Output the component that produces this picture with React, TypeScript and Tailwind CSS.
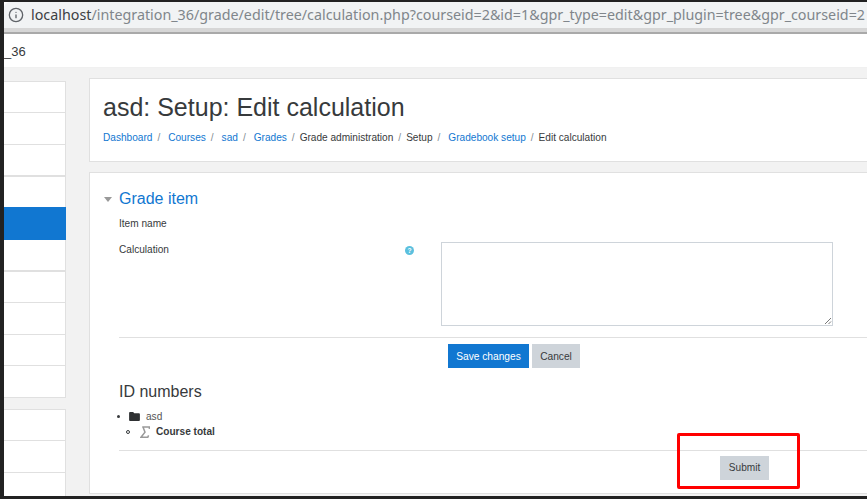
import React from "react";
import { Info } from "lucide-react";

const crumbs = [
  { label: "Dashboard", link: true },
  { label: "Courses", link: true },
  { label: "sad", link: true },
  { label: "Grades", link: true },
  { label: "Grade administration", link: false },
  { label: "Setup", link: false },
  { label: "Gradebook setup", link: true },
  { label: "Edit calculation", link: false },
];

const SideItem = ({ h, thick, last }: { h: string; thick?: boolean; last?: boolean }) => (
  <div
    className={`${h} bg-white border-[#e0e0e0] ${
      last ? "" : thick ? "border-b-2" : "border-b"
    }`}
  />
);

const App: React.FC = () => {
  return (
    <div
      className="relative w-[867px] h-[499px] overflow-hidden bg-[#222] pl-1 pt-[2px] text-[#373a3c]"
      style={{ fontFamily: '"Liberation Sans", Arial, sans-serif' }}
    >
      <div className="w-[863px] h-[494px] flex flex-col bg-white overflow-hidden">
        {/* browser address bar */}
        <div className="h-[32px] shrink-0 bg-[#f1f3f4] rounded-tl-md flex items-center pl-[4px] pb-[4px] border-b-2 border-[#a9a9a9] shadow-[inset_0_-4px_0_#d6d6d6]">
          <Info size={16} strokeWidth={2} className="text-[#5f6368] shrink-0" />
          <div
            className="ml-[7px] text-[14.3px] leading-5 whitespace-nowrap text-[#80868b]"
            style={{ fontFamily: '"Noto Sans", "Open Sans", sans-serif' }}
          >
            <span className="text-[#3c4043]">localhost</span>
            /integration_36/grade/edit/tree/calculation.php?courseid=2&amp;id=1&amp;gpr_type=edit&amp;gpr_plugin=tree&amp;gpr_courseid=2
          </div>
        </div>

        {/* moodle navbar */}
        <div className="h-[34px] shrink-0 flex items-center pt-[2px] text-[13px] border-b border-[#f0f0f0]">
          <span>_36</span>
        </div>

        {/* page */}
        <div className="flex-1 flex bg-[#f2f2f2] min-h-0">
          <div className="w-[62px] shrink-0 pt-[13px]">
            <div className="border-t border-r border-[#e0e0e0]">
              <SideItem h="h-[31px]" />
              <SideItem h="h-[32px]" />
              <SideItem h="h-[32px]" thick />
              <SideItem h="h-[30px]" last />
              <div className="h-[33px] bg-[#1177d1] -mr-px" />
              <SideItem h="h-[32px]" thick />
              <SideItem h="h-[31px]" />
              <SideItem h="h-[32px]" />
              <SideItem h="h-[31px]" />
              <SideItem h="h-[32px]" />
            </div>
            <div className="mt-[11px] border-t border-r border-[#e0e0e0]">
              <SideItem h="h-[31px]" />
              <SideItem h="h-[32px]" />
              <SideItem h="h-[32px]" />
            </div>
          </div>

          <div className="ml-[23px] w-[800px] shrink-0 pt-[10px]">
            {/* page header */}
            <div className="h-[84px] bg-white border border-[#e0e0e0] pl-[13px] pt-[13px]">
              <h1 className="text-[25px] leading-[31px]">asd: Setup: Edit calculation</h1>
              <div className="mt-[7px] flex text-[10.1px] leading-4 whitespace-nowrap">
                {crumbs.map((c, i) => (
                  <span key={c.label} className="flex">
                    <span className={c.link ? "text-[#1177d1]" : ""}>{c.label}</span>
                    {i < crumbs.length - 1 && (
                      <span className={`text-[#818a91] ml-[5px] ${crumbs[i + 1].link ? "mr-[8px]" : "mr-[5px]"}`}>
                        /
                      </span>
                    )}
                  </span>
                ))}
              </div>
            </div>

            {/* form */}
            <div className="mt-[10px] h-[322px] bg-white border border-[#e0e0e0] pl-[14px] pt-[16px]">
              <div className="flex items-center h-[20px]">
                <span className="w-0 h-0 border-x-[4px] border-x-transparent border-t-[5px] border-t-[#999]" />
                <span className="ml-[7px] text-[16px] text-[#1177d1]">Grade item</span>
              </div>
              <div className="ml-[15px]">
                <div className="mt-[7px] text-[10.1px] leading-4">Item name</div>
                <div className="mt-[10px] flex h-[84px]">
                  <div className="w-[286px] text-[10.1px] leading-4">Calculation</div>
                  <svg viewBox="0 0 16 16" className="w-[9px] h-[9px] mt-[4px]">
                    <circle cx="8" cy="8" r="8" fill="#5bc0de" />
                    <text x="8" y="12.5" textAnchor="middle" fontSize="12" fontWeight="bold" fill="#fff">?</text>
                  </svg>
                  <div className="ml-[27px] w-[392px] h-[84px] border border-[#ced4da] relative">
                    <svg viewBox="0 0 8 8" className="absolute right-0 bottom-0 w-[8px] h-[8px]">
                      <path d="M1 7 L7 1 M4.5 7 L7 4.5" stroke="#555" strokeWidth="0.8" />
                    </svg>
                  </div>
                </div>
                <div className="mt-[11px] border-t border-[#e0e0e0] h-[7px]" />
                <div className="flex ml-[329px] gap-[3px] text-[10.2px]">
                  <div className="h-[24px] w-[81px] pt-px bg-[#1177d1] text-white flex items-center justify-center">
                    Save changes
                  </div>
                  <div className="h-[24px] w-[48px] pt-px bg-[#ced4da] flex items-center justify-center">
                    Cancel
                  </div>
                </div>
                <div className="mt-[14px] text-[16px] leading-5">ID numbers</div>
                <div className="mt-[7px] text-[10.1px] leading-[15px]">
                  <div className="flex items-center h-[15px]">
                    <span className="w-[3px] h-[3px] rounded-full bg-[#373a3c] ml-[-2px]" />
                    <svg viewBox="0 0 12 10" className="w-[11px] h-[9px] ml-[9px]">
                      <path d="M0 1 Q0 0 1 0 H4.5 L5.7 1.4 H11 Q12 1.4 12 2.4 V9 Q12 10 11 10 H1 Q0 10 0 9 Z" fill="#2f3133" />
                    </svg>
                    <span className="ml-[6px] text-[#555]">asd</span>
                  </div>
                  <div className="flex items-center h-[15px]">
                    <span className="w-[4px] h-[4px] rounded-full border border-[#373a3c] ml-[7px]" />
                    <svg viewBox="0 0 10 12" className="w-[10px] h-[12px] ml-[10px]">
                      <path d="M2.2 1 H9.6 L9.2 2.8 M3 1 L5 6.2 L1 11.2 H7.8 L8.6 9.4" fill="none" stroke="#999" strokeWidth="1.5" />
                    </svg>
                    <span className="ml-[6px] font-bold">Course total</span>
                  </div>
                </div>
                <div className="mt-[11px] border-t border-[#e0e0e0]" />
                <div className="mt-[5px] ml-[601px] h-[24px] w-[49px] bg-[#ced4da] flex items-center justify-center text-[10.1px]">
                  Submit
                </div>
              </div>
            </div>
          </div>
        </div>
      </div>

      {/* red annotation round the button */}
      <div className="absolute left-[677px] top-[433px] w-[123px] h-[56px] border-[3px] border-[#ff0000] rounded-[2px]" />
    </div>
  );
};

export default App;
